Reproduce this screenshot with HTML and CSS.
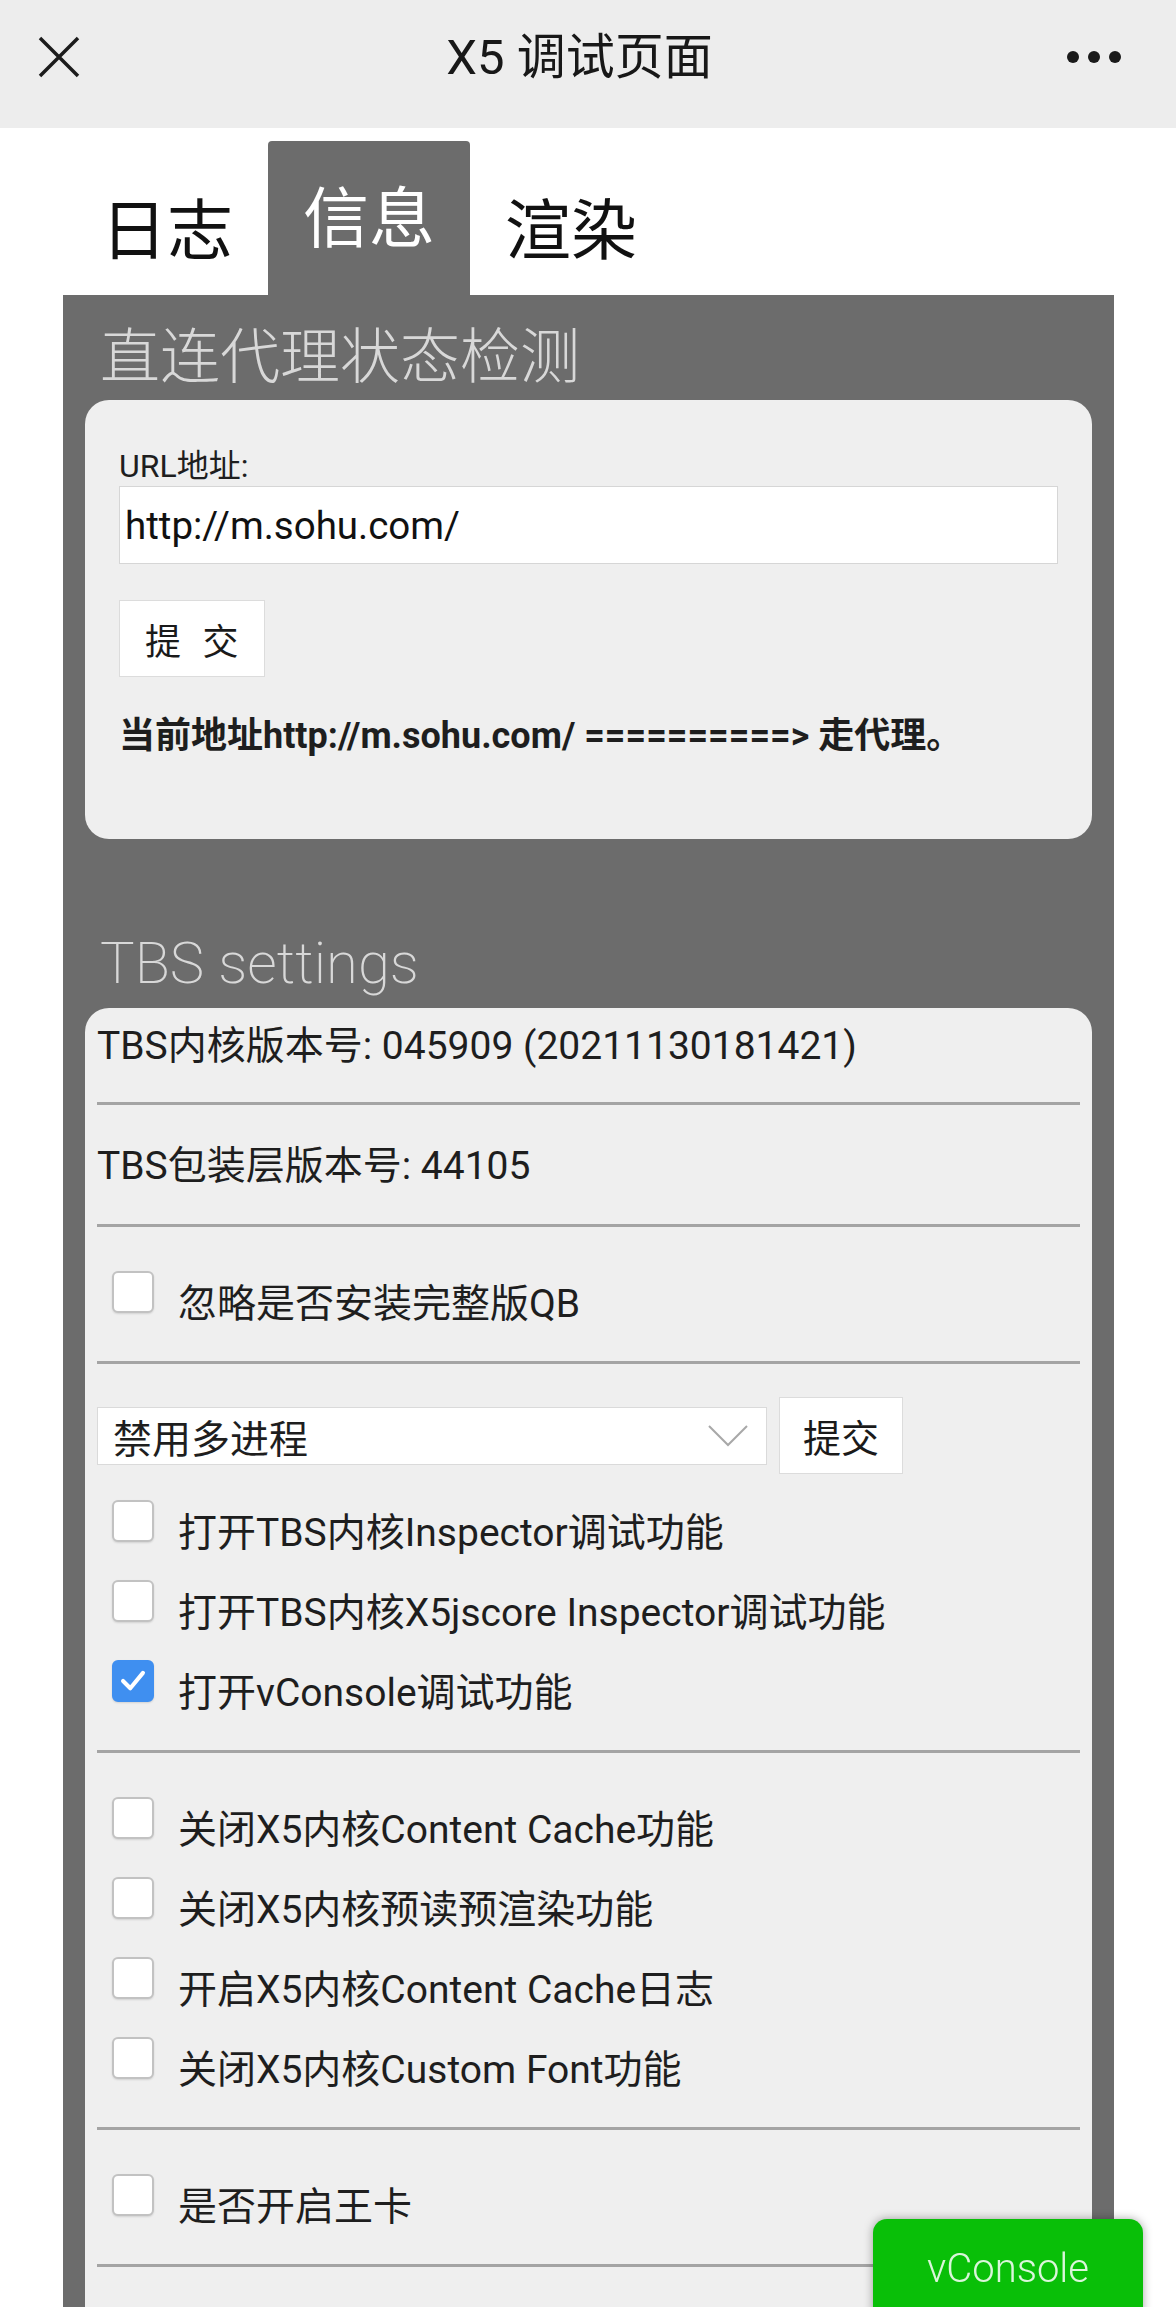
FILE: index.html
```html
<!DOCTYPE html>
<html lang="zh-CN">
<head>
    <meta charset="UTF-8">
    <meta name="viewport" content="width=device-width, initial-scale=1.0">
    <title>X5 调试页面</title>
    <link rel="stylesheet" href="styles.css">
</head>
<body>
    <div class="topbar">
        <svg class="close-icon" viewBox="0 0 42 42">
            <path d="M2 2 L40 40 M40 2 L2 40" stroke="#1c1c1c" stroke-width="3.5" fill="none"/>
        </svg>
        <div class="title">X5 调试页面</div>
        <div class="more"><span></span><span></span><span></span></div>
    </div>

    <div class="tabs">
        <div class="tab">日志</div>
        <div class="tab active">信息</div>
        <div class="tab">渲染</div>
    </div>

    <div class="panel">
        <h2 class="section-title">直连代理状态检测</h2>
        <div class="card proxy-card">
            <label class="field-label">URL地址:</label>
            <input class="url-input" type="text" value="http://m.sohu.com/">
            <button class="btn submit-btn">提 交</button>
            <p class="proxy-result">当前地址http://m.sohu.com/ ==========&gt; 走代理。</p>
        </div>

        <h2 class="section-title tbs-title">TBS settings</h2>
        <div class="card settings-card">
            <div class="info-row first">TBS内核版本号: 045909 (20211130181421)</div>
            <div class="divider"></div>
            <div class="info-row">TBS包装层版本号: 44105</div>
            <div class="divider"></div>

            <div class="check-group">
                <label class="check-row"><span class="check-box"></span><span class="check-text">忽略是否安装完整版QB</span></label>
            </div>
            <div class="divider"></div>

            <div class="check-group select-group">
                <div class="select-row">
                    <div class="select">
                        <span>禁用多进程</span>
                        <svg class="chevron" viewBox="0 0 40 22">
                            <polyline points="1,1 20,20 39,1" stroke="#a8a8a8" stroke-width="2" fill="none"/>
                        </svg>
                    </div>
                    <button class="btn small-btn">提交</button>
                </div>
                <label class="check-row"><span class="check-box"></span><span class="check-text">打开TBS内核Inspector调试功能</span></label>
                <label class="check-row"><span class="check-box"></span><span class="check-text">打开TBS内核X5jscore Inspector调试功能</span></label>
                <label class="check-row">
                    <span class="check-box checked">
                        <svg viewBox="0 0 42 42"><polyline points="10,21 18,29 32,12" stroke="#fff" stroke-width="4.5" fill="none" stroke-linecap="round" stroke-linejoin="round"/></svg>
                    </span>
                    <span class="check-text">打开vConsole调试功能</span>
                </label>
            </div>
            <div class="divider"></div>

            <div class="check-group">
                <label class="check-row"><span class="check-box"></span><span class="check-text">关闭X5内核Content Cache功能</span></label>
                <label class="check-row"><span class="check-box"></span><span class="check-text">关闭X5内核预读预渲染功能</span></label>
                <label class="check-row"><span class="check-box"></span><span class="check-text">开启X5内核Content Cache日志</span></label>
                <label class="check-row"><span class="check-box"></span><span class="check-text">关闭X5内核Custom Font功能</span></label>
            </div>
            <div class="divider"></div>

            <div class="check-group">
                <label class="check-row"><span class="check-box"></span><span class="check-text">是否开启王卡</span></label>
            </div>
            <div class="divider"></div>
        </div>
    </div>

    <div class="vconsole-btn">vConsole</div>
</body>
</html>
```

FILE: styles.css
```css
body {
    margin: 0;
    background: #fff;
    font-family: Roboto, "Noto Sans CJK SC", sans-serif;
    color: #1e1e1e;
    height: 100vh;
    overflow: hidden;
}
.topbar {
    height: 128px;
    box-sizing: border-box;
    padding: 0 55px 14px 38px;
    background: #ededed;
    display: grid;
    grid-template-columns: 1fr auto 1fr;
    align-items: center;
}
.close-icon {
    width: 42px;
    height: 42px;
    display: block;
}
.title {
    font-size: 49px;
    line-height: 1;
    color: #181818;
}
.more {
    justify-self: end;
    display: flex;
    gap: 9px;
}
.more span {
    width: 12px;
    height: 12px;
    border-radius: 50%;
    background: #1a1a1a;
}
.tabs {
    display: flex;
    align-items: flex-end;
    margin: 13px 0 0 66px;
}
.tab {
    height: 154px;
    box-sizing: border-box;
    padding: 51px 35px 0;
    font-family: "Noto Sans CJK SC", sans-serif;
    font-size: 66px;
    line-height: 1;
    color: #111;
}
.tab.active {
    background: #6c6c6c;
    color: #fff;
    padding-top: 39px;
    border-radius: 4px 4px 0 0;
}
.panel {
    margin: 0 62px 0 63px;
    padding: 0 22px;
    background: #6c6c6c;
    min-height: 2100px;
}
.section-title {
    margin: 0;
    padding: 33px 0 12px 15px;
    font-size: 60px;
    line-height: 1;
    font-weight: 200;
    color: #d8d8d8;
}
.tbs-title {
    padding-top: 95px;
    padding-bottom: 16px;
    font-size: 58px;
}
.card {
    background: #efefef;
    border-radius: 24px;
}
.proxy-card {
    padding: 48px 34px 79px;
}
.field-label {
    display: block;
    font-size: 32px;
    line-height: 36px;
}
.url-input {
    display: block;
    box-sizing: border-box;
    width: 100%;
    height: 78px;
    margin: 2px 0 0;
    padding: 0 5px;
    border: 1px solid #d6d6d6;
    border-radius: 0;
    background: #fff;
    font-family: Roboto, "Noto Sans CJK SC", sans-serif;
    font-size: 38.5px;
    color: #111;
    outline: none;
}
.btn {
    background: #fff;
    border: 1px solid #dcdcdc;
    border-radius: 0;
    font-family: Roboto, "Noto Sans CJK SC", sans-serif;
    color: #1a1a1a;
    padding: 0;
}
.submit-btn {
    display: block;
    margin-top: 36px;
    height: 77px;
    padding: 0 25px;
    font-size: 36px;
    word-spacing: 0.35em;
}
.proxy-result {
    margin: 35px 0 0;
    font-size: 36px;
    font-weight: bold;
    line-height: 48px;
}
.settings-card {
    padding: 0 12px 120px;
    border-radius: 24px 24px 0 0;
}
.info-row {
    font-size: 39px;
    line-height: 50px;
    padding: 36px 0 33px;
}
.info-row.first {
    padding: 13px 0 31px;
}
.divider {
    height: 3px;
    background: #a4a4a4;
}
.check-group {
    display: flex;
    flex-direction: column;
    gap: 22px;
    padding: 44px 0 32px;
}
.select-group {
    padding-top: 33px;
}
.check-row {
    display: flex;
    align-items: flex-start;
    font-size: 39px;
    line-height: 50px;
}
.check-text {
    padding-top: 8px;
}
.check-box {
    flex: none;
    width: 42px;
    height: 42px;
    box-sizing: border-box;
    margin: 0 24px 0 15px;
    border: 2px solid #c2c2c2;
    border-radius: 6px;
    background: #fff;
    box-shadow: 0 1px 2px rgba(0, 0, 0, 0.12);
}
.check-box.checked {
    background: #3f8ff0;
    border-color: #3f8ff0;
}
.check-box svg {
    display: block;
    width: 38px;
    height: 38px;
}
.select-row {
    display: flex;
    align-items: center;
    gap: 12px;
    margin-bottom: 4px;
}
.select {
    width: 670px;
    height: 58px;
    box-sizing: border-box;
    padding: 0 18px 0 15px;
    border: 1px solid #dadada;
    background: #fff;
    display: flex;
    align-items: center;
    justify-content: space-between;
    font-size: 39px;
}
.chevron {
    width: 40px;
    height: 22px;
    display: block;
}
.small-btn {
    height: 77px;
    padding: 0 23px;
    font-size: 38px;
}
.vconsole-btn {
    position: fixed;
    right: 33px;
    bottom: -22px;
    width: 270px;
    height: 110px;
    box-sizing: border-box;
    padding-top: 30px;
    background: #09bf08;
    border-radius: 14px;
    box-shadow: 0 0 10px rgba(0, 0, 0, 0.35);
    color: rgba(255, 255, 255, 0.85);
    font-size: 40px;
    font-weight: 300;
    line-height: 1;
    text-align: center;
}
```
